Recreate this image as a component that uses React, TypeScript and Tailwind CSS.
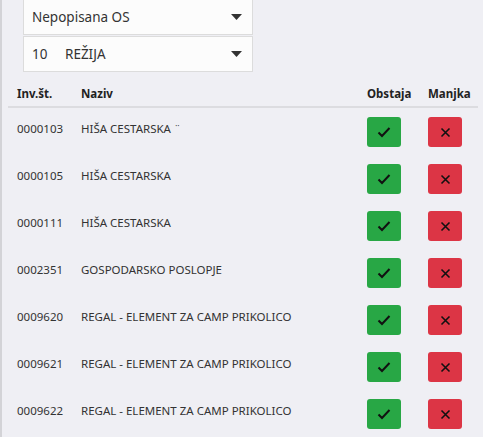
import React from "react";

const rows = [
  ["0000103", "HIŠA CESTARSKA ¨"],
  ["0000105", "HIŠA CESTARSKA"],
  ["0000111", "HIŠA CESTARSKA"],
  ["0002351", "GOSPODARSKO POSLOPJE"],
  ["0009620", "REGAL - ELEMENT ZA CAMP PRIKOLICO"],
  ["0009621", "REGAL - ELEMENT ZA CAMP PRIKOLICO"],
  ["0009622", "REGAL - ELEMENT ZA CAMP PRIKOLICO"],
];

function Caret() {
  return (
    <svg width="11" height="6" viewBox="0 0 11 6" className="shrink-0">
      <path d="M0 0 L11 0 L5.5 6 Z" fill="#333" />
    </svg>
  );
}

function Check() {
  return (
    <svg width="14" height="12" viewBox="0 0 14 12">
      <path d="M1.5 6.5 L5 10 L12.5 2" fill="none" stroke="#111" strokeWidth="2" />
    </svg>
  );
}

function Cross() {
  return (
    <svg width="11" height="11" viewBox="0 0 11 11">
      <path d="M1.5 1.5 L9.5 9.5 M9.5 1.5 L1.5 9.5" fill="none" stroke="#111" strokeWidth="1.6" />
    </svg>
  );
}

export default function App() {
  return (
    <div
      className="w-[483px] h-[437px] overflow-hidden bg-[#efeff4] border-l-2 border-[#d3d3d7] text-[#333]"
      style={{ fontFamily: '"Noto Sans", "Open Sans", sans-serif' }}
    >
      <div className="ml-[21px] w-[230px] flex flex-col gap-[1px]">
        <div className="h-[35px] bg-[#fcfcfc] border border-t-0 border-[#dcdcdc] flex items-center pl-[8px] pr-[10px] text-[13.5px]">
          <span className="flex-1">Nepopisana OS</span>
          <Caret />
        </div>
        <div className="h-[36px] bg-[#fcfcfc] border border-[#dcdcdc] flex items-center pl-[8px] pr-[10px] text-[13.5px]">
          <span className="w-[33px]">10</span>
          <span className="flex-1">REŽIJA</span>
          <Caret />
        </div>
      </div>
      <div className="ml-[6px] mr-[5px] mt-[9px]">
        <div className="flex items-center h-[27px] border-b-2 border-[#dcdce0] text-[11.5px] font-bold text-[#222]">
          <div className="w-[73px] pl-[9px]">Inv.št.</div>
          <div className="flex-1">Naziv</div>
          <div className="w-[61px]">Obstaja</div>
          <div className="w-[50px]">Manjka</div>
        </div>
        <div className="pt-[9px] flex flex-col">
          {rows.map(([id, name]) => (
            <div key={id} className="flex items-start h-[47px] text-[11.5px]">
              <div className="w-[73px] pl-[9px] pt-[3px]">{id}</div>
              <div className="flex-1 pt-[3px]">{name}</div>
              <div className="w-[61px]">
                <div className="w-[34px] h-[30px] rounded-[3px] bg-[#28a745] flex items-center justify-center">
                  <Check />
                </div>
              </div>
              <div className="w-[50px]">
                <div className="w-[34px] h-[30px] rounded-[3px] bg-[#dc3545] flex items-center justify-center">
                  <Cross />
                </div>
              </div>
            </div>
          ))}
        </div>
      </div>
    </div>
  );
}
